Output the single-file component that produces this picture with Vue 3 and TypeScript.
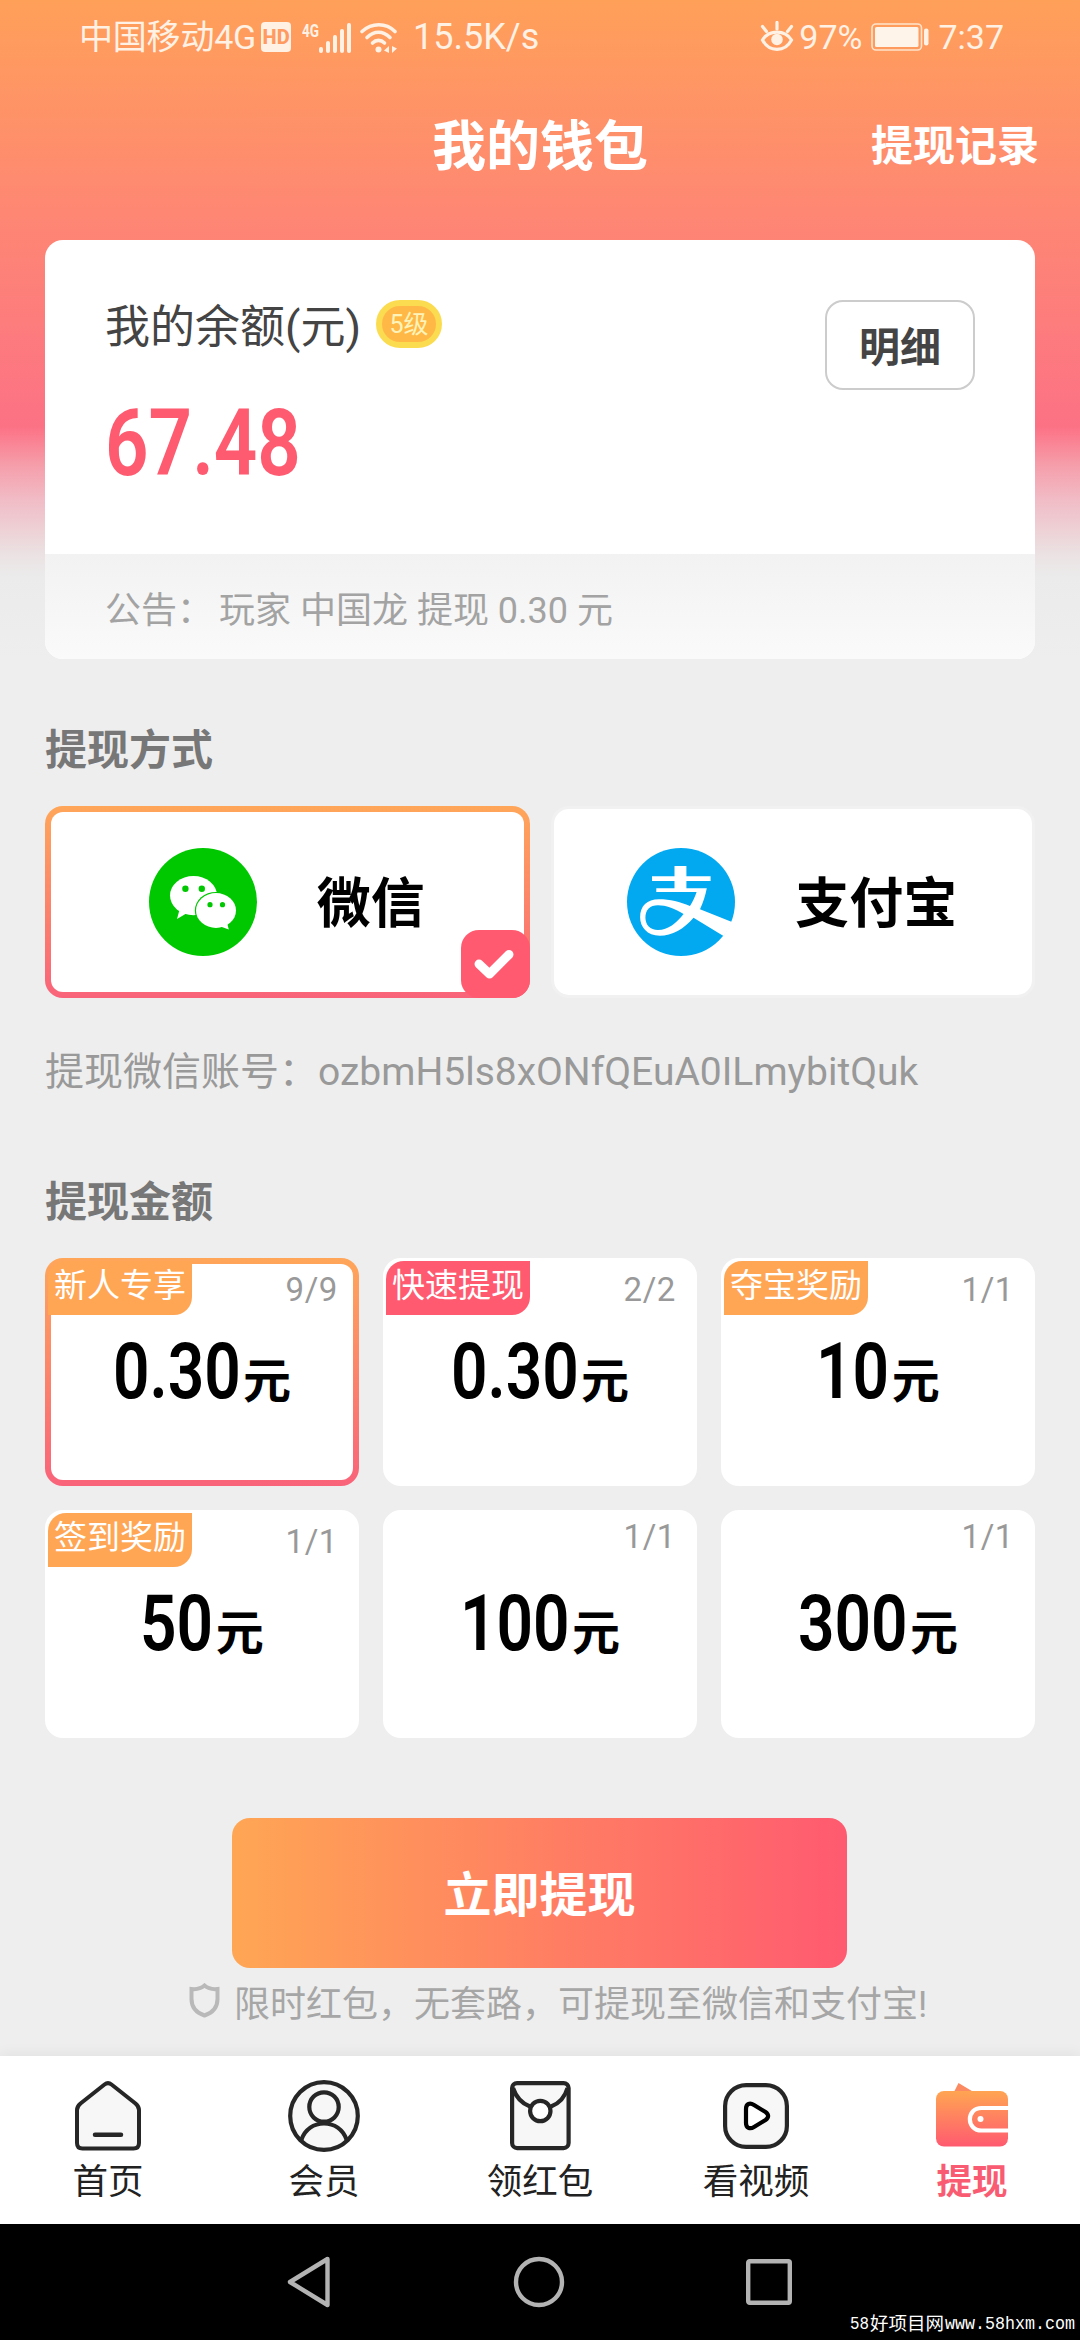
<script setup lang="ts">
import { ref } from 'vue'

type TagTone = 'orange' | 'red'

interface AmountOption {
  value: string
  quota: string
  tag?: string
  tone?: TagTone
}

interface Tab {
  key: 'home' | 'member' | 'packet' | 'video' | 'wallet'
  label: string
}

const CONDENSE = 0.82

const balance = '67.48'
const selectedAmount = ref(0)
const activeTab = ref<Tab['key']>('wallet')

const amounts: AmountOption[] = [
  { value: '0.30', quota: '9/9', tag: '新人专享', tone: 'orange' },
  { value: '0.30', quota: '2/2', tag: '快速提现', tone: 'red' },
  { value: '10', quota: '1/1', tag: '夺宝奖励', tone: 'orange' },
  { value: '50', quota: '1/1', tag: '签到奖励', tone: 'orange' },
  { value: '100', quota: '1/1' },
  { value: '300', quota: '1/1' },
]

const tabs: Tab[] = [
  { key: 'home', label: '首页' },
  { key: 'member', label: '会员' },
  { key: 'packet', label: '领红包' },
  { key: 'video', label: '看视频' },
  { key: 'wallet', label: '提现' },
]

// Takes back the width that the horizontally condensed digits leave free.
function condensedMargin(value: string): string {
  const em = [...value].reduce((sum, ch) => sum + (ch === '.' ? 0.28 : 0.565), 0)
  return `${(-(1 - CONDENSE) * em).toFixed(3)}em`
}
</script>

<template>
  <div class="screen">
    <div class="status">
      <div class="status-left">
        <span class="carrier">中国移动4G</span>
        <span class="hd">HD</span>
        <svg class="signal" width="50" height="34" viewBox="0 0 50 34">
          <text x="0" y="16.500" font-size="19" font-weight="700" textLength="17" lengthAdjust="spacingAndGlyphs" fill="#fff1e4">4G</text>
          <g fill="#fff1e4">
            <rect x="17" y="27" width="4" height="6" rx="2" />
            <rect x="24" y="21" width="4" height="12" rx="2" />
            <rect x="31" y="15" width="4" height="18" rx="2" />
            <rect x="38" y="9" width="4" height="24" rx="2" />
            <rect x="45" y="3" width="4" height="30" rx="2" />
          </g>
        </svg>
        <svg class="wifi" width="38" height="34" viewBox="0 0 38 34">
          <g fill="none" stroke="#fff1e4" stroke-width="3.600" stroke-linecap="round">
            <path d="M2 11.500C12 2.500 26 2.500 35 11.500" />
            <path d="M7 17.500C14 10.500 23 10.500 30 17.500" />
            <path d="M12.500 23C16 19.500 21 19.500 24.500 23" />
          </g>
          <circle cx="18.500" cy="29.500" r="3" fill="#fff1e4" />
          <path d="M29 26v7l-5-2.500zM32 26v7l5-4.500z" fill="#fff1e4" />
        </svg>
        <span class="speed">15.5K/s</span>
      </div>
      <div class="status-right">
        <svg width="34" height="32" viewBox="0 0 34 32">
          <path d="M2.500 19C9 8.500 25 8.500 31.500 19C25 31.500 9 31.500 2.500 19Z" fill="none" stroke="#fff1e4" stroke-width="3.200" />
          <circle cx="17" cy="18.500" r="5.800" fill="#fff1e4" />
          <path d="M17 1.500V8M2.500 5.500L6.500 10.500M31.500 5.500L27.500 10.500" stroke="#fff1e4" stroke-width="3.200" stroke-linecap="round" />
        </svg>
        <span class="percent">97%</span>
        <svg class="battery" width="59" height="28" viewBox="0 0 59 28">
          <rect x="1" y="1" width="49.500" height="26" rx="4" fill="none" stroke="#ffe3cc" stroke-width="1.600" />
          <rect x="4" y="4" width="43.500" height="20" rx="1.500" fill="#fff4ea" />
          <rect x="53" y="5.500" width="4.500" height="17" rx="2" fill="#fff1e4" />
        </svg>
        <span class="clock">7:37</span>
      </div>
    </div>

    <header class="header">
      <h1>我的钱包</h1>
      <span class="records">提现记录</span>
    </header>

    <section class="balance-card">
      <div class="balance-main">
        <div>
          <div class="balance-title">
            <span class="balance-label">我的余额(元)</span>
            <span class="level">5级</span>
          </div>
          <div class="balance-value">{{ balance }}</div>
        </div>
        <button class="detail">明细</button>
      </div>
      <div class="notice"><span class="notice-label">公告：</span>玩家 中国龙 提现 0.30 元</div>
    </section>

    <h2 class="method-title">提现方式</h2>
    <div class="methods">
      <div class="method chosen">
        <svg width="108" height="108" viewBox="0 0 108 108">
          <circle cx="54" cy="54" r="54" fill="#00c800" />
          <ellipse cx="44.500" cy="47.600" rx="23.500" ry="19.600" fill="#fff" />
          <path d="M31 60L28 71L39 64.500Z" fill="#fff" />
          <ellipse cx="67" cy="62.500" rx="21.200" ry="18.600" fill="#00c800" />
          <ellipse cx="67" cy="62.500" rx="20" ry="17.400" fill="#fff" />
          <path d="M70 78L79.800 81.500L77.500 73Z" fill="#fff" />
          <g fill="#00c800">
            <circle cx="36.400" cy="40.700" r="3.200" />
            <circle cx="52.800" cy="40.700" r="3.200" />
            <circle cx="61" cy="56.700" r="2.600" />
            <circle cx="73.500" cy="56.700" r="2.600" />
          </g>
        </svg>
        <span class="method-name">微信</span>
        <div class="check">
          <svg width="69" height="68" viewBox="0 0 69 68">
            <path d="M18 34L28.500 44L48 24.500" fill="none" stroke="#fff" stroke-width="9" stroke-linecap="round" stroke-linejoin="round" />
          </svg>
        </div>
      </div>
      <div class="method">
        <svg width="108" height="108" viewBox="0 0 108 108">
          <circle cx="54" cy="54" r="54" fill="#02a9f1" />
          <path
            d="M47.500 18H59.400V28.300H83.600V33H59.400V40.300H79.800C78.500 47 76 55 73 61.300L105 74C103 79 100 84 96.500 88L66.500 69.700C57 81 45 87.700 32.800 87.700C20 87.700 13.100 79 13.100 69.300C13.100 58 20 51.300 32 51.300C43 51.300 53 54 63 58C66 53 68 49 69.600 44H29.300V40.300H47.500V33H25V28.300H47.500Z"
            fill="#fff"
          />
          <path d="M56.600 66C47 60.500 39 57.300 31 57.300C23 57.300 18.400 62 18.400 69.300C18.400 77 23 82 31 82C41 82 49.500 75 56.600 66Z" fill="#02a9f1" />
        </svg>
        <span class="method-name">支付宝</span>
      </div>
    </div>
    <p class="account">提现微信账号：<span>ozbmH5ls8xONfQEuA0ILmybitQuk</span></p>

    <h2 class="amount-title">提现金额</h2>
    <div class="amounts">
      <div
        v-for="(item, i) in amounts"
        :key="i"
        class="amount"
        :class="{ selected: i === selectedAmount }"
        @click="selectedAmount = i"
      >
        <div class="amount-top">
          <span v-if="item.tag" class="tag" :class="item.tone">{{ item.tag }}</span>
          <span class="quota" :class="{ raised: !item.tag }">{{ item.quota }}</span>
        </div>
        <div class="amount-value">
          <span class="digits" :style="{ marginRight: condensedMargin(item.value) }">{{ item.value }}</span>
          <span class="unit">元</span>
        </div>
      </div>
    </div>

    <button class="submit">立即提现</button>
    <div class="hint">
      <svg width="31" height="35" viewBox="0 0 31 35">
        <path d="M15.500 2.500C12 5.500 7 6.500 2.500 6V16C2.500 24.500 8 30 15.500 32.500C23 30 28.500 24.500 28.500 16V6C24 6.500 19 5.500 15.500 2.500Z" fill="none" stroke="#b9b9b9" stroke-width="4" />
      </svg>
      <span>限时红包，无套路，可提现至微信和支付宝!</span>
    </div>

    <nav class="tabs">
      <div
        v-for="tab in tabs"
        :key="tab.key"
        class="tab"
        :class="{ active: tab.key === activeTab }"
        @click="activeTab = tab.key"
      >
        <div class="tab-icon">
          <svg v-if="tab.key === 'home'" width="66" height="70" viewBox="0 0 66 70">
            <path d="M29.500 3.500Q33 .8 36.500 3.500L60.500 22.500Q64 25.500 64 29V62Q64 67.500 58.500 67.500H7.500Q2 67.500 2 62V29Q2 25.500 5.500 22.500Z" fill="#f7f7f7" stroke="#262626" stroke-width="4" />
            <path d="M20 53.700H46" stroke="#262626" stroke-width="4.500" stroke-linecap="round" />
          </svg>
          <svg v-else-if="tab.key === 'member'" width="72" height="72" viewBox="0 0 72 72">
            <g fill="#f7f7f7" stroke="#262626" stroke-width="4.200">
              <circle cx="36" cy="36" r="33.800" />
              <circle cx="36" cy="27" r="14.700" />
              <path d="M13.300 60C17 49 26 43.500 36 43.500S55 49 58.700 60" fill="none" />
            </g>
          </svg>
          <svg v-else-if="tab.key === 'packet'" width="61" height="70" viewBox="0 0 61 70">
            <g fill="#f7f7f7" stroke="#262626" stroke-width="4.200">
              <rect x="2.100" y="2.100" width="56.500" height="65" rx="5" />
              <path d="M3 7C6 16 12 22.500 20 25.500M57.500 7C55 16 49 22.500 41 25.500" fill="none" />
              <circle cx="30.300" cy="30" r="10.200" fill="#fff" />
            </g>
          </svg>
          <svg v-else-if="tab.key === 'video'" width="66" height="66" viewBox="0 0 66 66">
            <rect x="2.100" y="2.100" width="61.800" height="61.800" rx="21" fill="#f7f7f7" stroke="#262626" stroke-width="4.200" />
            <path d="M23 26C23 20.500 27 19.500 31 22L42.500 29C46 31.500 46 34.500 42.500 37L31 44C27 46.500 23 45 23 40Z" fill="#fff" stroke="#000" stroke-width="4.200" />
          </svg>
          <svg v-else width="72" height="66" viewBox="0 0 72 66">
            <defs>
              <linearGradient id="wallet-fill" x1="0" y1="0" x2="0" y2="1">
                <stop offset="0" stop-color="#ffa552" />
                <stop offset="1" stop-color="#ff5a70" />
              </linearGradient>
            </defs>
            <path d="M18 9L22.500 0L37.500 9Z" fill="#fb8a62" />
            <rect y="8" width="72" height="55.500" rx="8" fill="url(#wallet-fill)" />
            <path d="M73 25H45.500C30 25 30 47.500 45.500 47.500H73" fill="none" stroke="#fff" stroke-width="4.200" />
            <circle cx="44.500" cy="36" r="3" fill="#fff" />
          </svg>
        </div>
        <span class="tab-label">{{ tab.label }}</span>
      </div>
    </nav>

    <div class="system-nav">
      <div class="system-keys">
        <svg width="44" height="52" viewBox="0 0 44 52">
          <path d="M40.500 3L3 26L40.500 49Z" fill="none" stroke="#b3b3b3" stroke-width="4.400" stroke-linejoin="round" />
        </svg>
        <svg width="52" height="52" viewBox="0 0 52 52">
          <circle cx="26" cy="26" r="23" fill="none" stroke="#b3b3b3" stroke-width="4.400" />
        </svg>
        <svg width="46" height="46" viewBox="0 0 46 46">
          <rect x="2.200" y="2.200" width="41.600" height="41.600" rx="1.500" fill="none" stroke="#b3b3b3" stroke-width="4.400" />
        </svg>
      </div>
      <svg class="watermark" width="230" height="36" viewBox="0 0 230 36">
        <g fill="#fff" font-size="18.500">
          <text class="mono" x="0" y="28" textLength="19" lengthAdjust="spacingAndGlyphs">58</text>
          <text class="cjk" x="20" y="28.500">好项目网</text>
          <text class="mono" x="95" y="28" textLength="130" lengthAdjust="spacingAndGlyphs">www.58hxm.com</text>
        </g>
      </svg>
    </div>
  </div>
</template>

<style>
body {
  background: #eee;
}
</style>

<style scoped>
.screen {
  width: 1080px;
  height: 2340px;
  box-sizing: border-box;
  display: flex;
  flex-direction: column;
  overflow: hidden;
  font-family: Roboto, 'Noto Sans CJK SC', sans-serif;
  background: linear-gradient(to bottom, #ffa059 0, #fe8773 210px, #fc7285 427px, #f5a0ac 467px, #f1bcc6 500px, #edd3d7 533px, #ebe2e3 555px, #ebebeb 577px, #eee 660px);
}
svg {
  display: block;
  flex: none;
}
h1,
h2,
p {
  margin: 0;
}
button {
  font-family: inherit;
  padding: 0;
}

.status {
  height: 74px;
  flex: none;
  padding: 0 76px 0 79px;
  display: flex;
  justify-content: space-between;
  color: #fff1e4;
  line-height: 74px;
}
.status-left,
.status-right {
  display: flex;
  align-items: center;
}
.carrier {
  font-size: 34px;
  letter-spacing: -0.2px;
  white-space: nowrap;
}
.hd {
  width: 30px;
  height: 30px;
  margin-left: 5px;
  border-radius: 4px;
  background: #fff1e4;
  color: #ff9a60;
  font-size: 20px;
  font-weight: 800;
  line-height: 30px;
  text-align: center;
}
.signal {
  margin-left: 11px;
}
.wifi {
  margin-left: 8px;
}
.speed {
  margin-left: 15px;
  font-size: 36px;
}
.percent {
  margin-left: 5px;
  font-size: 34px;
}
.battery {
  margin-left: 9px;
}
.clock {
  margin-left: 8px;
  font-size: 34px;
}

.header {
  height: 142px;
  flex: none;
  box-sizing: border-box;
  margin-bottom: 24px;
  padding: 0 41px;
  display: grid;
  grid-template-columns: 1fr auto 1fr;
  align-items: center;
  color: #fff;
  font-weight: 700;
}
.header h1 {
  grid-column: 2;
  padding-top: 6px;
  font-size: 54px;
  line-height: 80px;
}
.records {
  justify-self: end;
  padding-bottom: 6px;
  font-size: 42px;
}

.balance-card {
  margin: 0 45px;
  height: 419px;
  border-radius: 18px;
  background: #fff;
  overflow: hidden;
  flex: none;
}
.balance-main {
  height: 314px;
  box-sizing: border-box;
  padding: 60px 60px 0 60px;
  display: flex;
  justify-content: space-between;
  align-items: flex-start;
}
.balance-title {
  height: 48px;
  display: flex;
  align-items: center;
  gap: 15px;
  font-size: 45px;
  line-height: 48px;
  color: #444;
}
.balance-label {
  padding-top: 7px;
}
.level {
  width: 66px;
  height: 48px;
  box-sizing: border-box;
  border: 6px solid #fbdc50;
  border-radius: 24px;
  background: #ffb846;
  color: #fff3b8;
  font-size: 25px;
  line-height: 38px;
  text-align: center;
}
.balance-value {
  width: max-content;
  margin-top: 41px;
  font-size: 93px;
  line-height: 110px;
  font-weight: 600;
  color: #fe5b70;
  transform: scaleX(0.82);
  transform-origin: left;
}
.detail {
  width: 150px;
  height: 90px;
  box-sizing: border-box;
  padding-bottom: 2px;
  border: 2px solid #ccc;
  border-radius: 18px;
  background: #fff;
  color: #444;
  font-size: 41px;
  font-weight: 700;
}
.notice {
  height: 105px;
  padding: 5px 60px 0;
  box-sizing: border-box;
  background: linear-gradient(#f2f2f2, #fafafa);
  color: #a3a3a3;
  font-size: 36px;
  line-height: 105px;
  white-space: nowrap;
}
.notice-label {
  margin-right: 6px;
}

.method-title,
.amount-title {
  margin: 0 45px;
  padding-top: 2px;
  height: 60px;
  box-sizing: border-box;
  color: #777;
  font-size: 42px;
  line-height: 60px;
  font-weight: 700;
  flex: none;
}
.method-title {
  margin-top: 60px;
}
.methods {
  margin: 27px 45px 0;
  display: grid;
  grid-template-columns: 1fr 1fr;
  gap: 21px;
  flex: none;
}
.method {
  position: relative;
  height: 192px;
  box-sizing: border-box;
  padding-right: 1px;
  border: 3px solid #f1f1f1;
  border-radius: 18px;
  background: #fff;
  display: flex;
  align-items: center;
  justify-content: center;
  gap: 60px;
  font-size: 54px;
  line-height: 80px;
  font-weight: 700;
  color: #000;
}
.method-name {
  padding-top: 6px;
}
.method.chosen {
  border: 6px solid transparent;
  background:
    linear-gradient(#fff, #fff) padding-box,
    linear-gradient(#ffa659, #f9637a) border-box;
}
.check {
  position: absolute;
  right: -6px;
  bottom: -6px;
  width: 69px;
  height: 68px;
  border-radius: 18px;
  background: #ff5a70;
}
.account {
  margin: 44px 45px 0;
  height: 60px;
  flex: none;
  color: #999;
  font-size: 39px;
  line-height: 60px;
  white-space: nowrap;
}
.amount-title {
  margin-top: 69px;
}

.amounts {
  margin: 27px 45px 0;
  display: grid;
  grid-template-columns: repeat(3, 1fr);
  gap: 24px;
  flex: none;
}
.amount {
  height: 228px;
  box-sizing: border-box;
  border: 3px solid #fff;
  border-radius: 18px;
  background: #fff;
}
.amount.selected {
  border: 6px solid transparent;
  background:
    linear-gradient(#fff, #fff) padding-box,
    linear-gradient(#ffa659, #f9637a) border-box;
}
.amount.selected .amount-top {
  margin: -3px -3px 0;
}
.amount-top {
  height: 54px;
  display: flex;
}
.tag {
  width: 144px;
  height: 54px;
  border-radius: 18px 0 18px 0;
  color: #fff;
  font-size: 33px;
  line-height: 49px;
  text-align: center;
}
.tag.orange {
  background: #ffa655;
}
.tag.red {
  background: #ff5a70;
}
.quota {
  margin-left: auto;
  margin-right: 18px;
  color: #999;
  font-size: 33px;
  letter-spacing: 0.6px;
  line-height: 58px;
}
.quota.raised {
  line-height: 48px;
}
.amount-value {
  height: 80px;
  display: flex;
  align-items: baseline;
  justify-content: center;
  margin-top: 17px;
  line-height: 80px;
  color: #000;
  white-space: nowrap;
}
.digits {
  display: inline-block;
  font-size: 78px;
  font-weight: 600;
  transform: scaleX(0.82);
  transform-origin: left;
}
.unit {
  margin-left: 2px;
  font-size: 48px;
  font-weight: 700;
}

.submit {
  width: 615px;
  height: 150px;
  margin: 80px 0 0 232px;
  padding-bottom: 4px;
  flex: none;
  border: 0;
  border-radius: 18px;
  background: linear-gradient(to right, #ffa654, #ff5a70);
  color: #fff;
  font-size: 48px;
  font-weight: 700;
}
.hint {
  height: 88px;
  padding-left: 189px;
  box-sizing: border-box;
  display: flex;
  flex: none;
  color: #a6a6a6;
  font-size: 36px;
  line-height: 74px;
  white-space: nowrap;
}
.hint svg {
  margin: 15px 14px 0 0;
}

.tabs {
  height: 168px;
  flex: none;
  display: grid;
  grid-template-columns: repeat(5, 1fr);
  background: #fff;
  box-shadow: 0 -3px 12px rgba(0, 0, 0, 0.05);
}
.tab {
  display: flex;
  flex-direction: column;
  align-items: center;
  color: #222;
  font-size: 35.5px;
  line-height: 50px;
}
.tab-icon {
  height: 80px;
  margin-top: 20px;
  display: flex;
  align-items: center;
}
.tab-label {
  padding-top: 1px;
}
.tab.active {
  color: #f95c72;
  font-weight: 700;
}

.system-nav {
  position: relative;
  height: 116px;
  flex: none;
  background: #000;
}
.system-keys {
  height: 116px;
  padding: 0 288px 0 287px;
  display: flex;
  align-items: center;
  justify-content: space-between;
}
.watermark {
  position: absolute;
  right: 0;
  bottom: 3px;
}
.mono {
  font-family: 'Liberation Mono', monospace;
}
.cjk {
  font-family: 'Noto Sans CJK SC', sans-serif;
}
</style>
